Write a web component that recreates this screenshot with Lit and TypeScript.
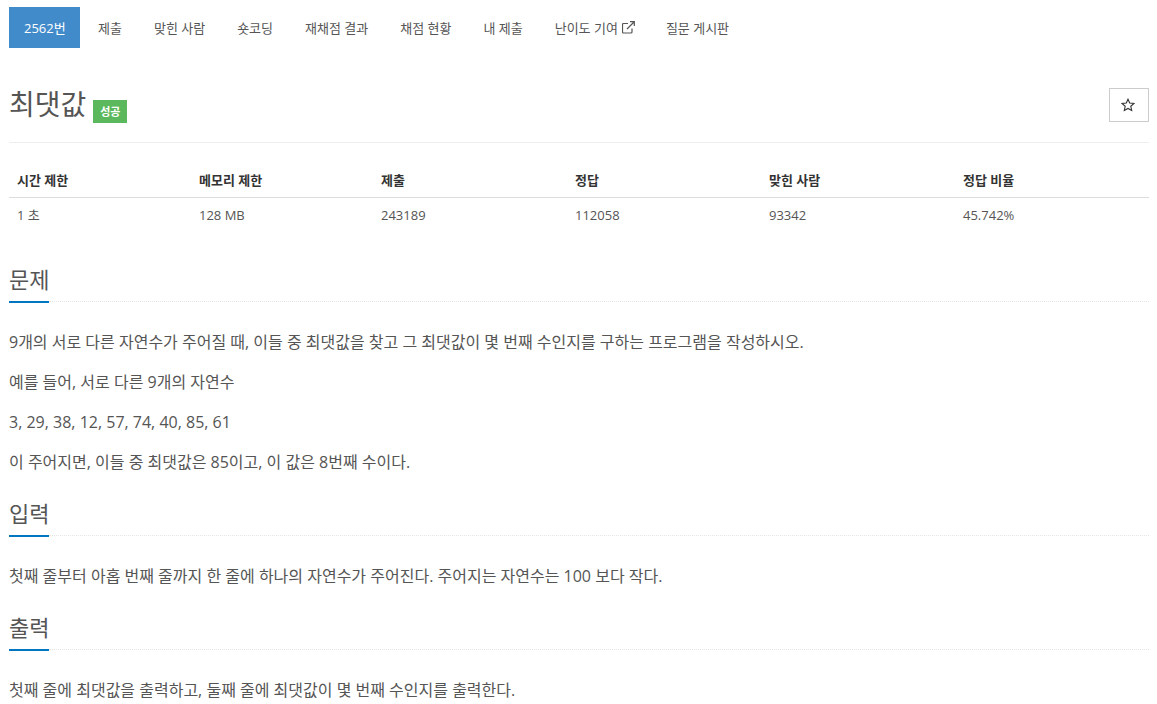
import { LitElement, html, css } from "lit";
import { customElement } from "lit/decorators.js";

const tabs = ["제출", "맞힌 사람", "숏코딩", "재채점 결과", "채점 현황", "내 제출"];
const heads = ["시간 제한", "메모리 제한", "제출", "정답", "맞힌 사람", "정답 비율"];
const vals = ["1 초", "128 MB", "243189", "112058", "93342", "45.742%"];

@customElement("app-root")
export class AppRoot extends LitElement {
  static styles = css`
    :host {
      display: block;
      height: 704px;
      overflow: hidden;
      background: #fff;
      color: #555;
      font-family: "Open Sans", "Noto Sans CJK KR", sans-serif;
      font-size: 13px;
      line-height: 20px;
      padding: 7px 8px 0 9px;
      box-sizing: border-box;
    }
    .nav {
      display: flex;
      gap: 2px;
      height: 41px;
    }
    .nav a {
      display: flex;
      align-items: center;
      gap: 4px;
      padding: 0 15px;
      color: #555;
    }
    .nav a.active {
      background: #428bca;
      color: #fff;
      width: 71px;
      box-sizing: border-box;
      margin-right: 1px;
      white-space: nowrap;
    }
    .nav svg {
      margin-right: -1px;
    }
    .head {
      display: flex;
      align-items: flex-end;
      justify-content: space-between;
      margin-top: 38px;
      border-bottom: 1px solid #eee;
      padding-bottom: 20px;
      height: 36px;
    }
    .title {
      display: flex;
      align-items: flex-end;
      gap: 7px;
    }
    h1 {
      margin: 0;
      font-size: 28px;
      line-height: 36px;
      font-weight: 400;
      color: #555;
    }
    .badge {
      background: #5cb85c;
      color: #fff;
      font-size: 11px;
      font-weight: 700;
      line-height: 23px;
      height: 23px;
      width: 34px;
      text-align: center;
      margin-bottom: -1px;
    }
    .star {
      height: 32px;
      border: 1px solid #ccc;
      display: flex;
      align-items: center;
      justify-content: center;
      padding-right: 2px;
      width: 36px;
    }
    .table {
      display: grid;
      grid-template-columns: 182px 182px 194px 194px 194px 1fr;
      margin-top: 20px;
    }
    .table div {
      padding: 8px;
      line-height: 19px;
    }
    .table .th {
      font-weight: 700;
      color: #333;
      font-size: 13px;
      border-bottom: 1px solid #ddd;
      padding-bottom: 7px;
    }
    .td {
      font-size: 13px;
    }
    h2 {
      margin: 0;
      font-size: 22px;
      font-weight: 400;
      line-height: 31px;
      color: #555;
    }
    .rule {
      height: 2px;
      display: flex;
      margin-top: 6px;
    }
    .rule i {
      display: block;
      width: 40px;
      height: 2px;
      background: #0076c0;
    }
    .rule b {
      flex: 1;
      height: 1px;
      border-top: 1px dotted #e5e5e5;
    }
    p {
      margin: 0 0 10px;
      font-size: 16px;
      line-height: 30px;
      color: #555;
    }
    .body {
      margin-top: 24px;
    }
    .sec-first {
      margin-top: 31px;
    }
    .sec {
      margin-top: 21px;
    }
  `;

  section(title: string, lines: string[], cls: string) {
    return html`<div class=${cls}>
      <h2>${title}</h2>
      <div class="rule"><i></i><b></b></div>
      <div class="body">${lines.map((l) => html`<p>${l}</p>`)}</div>
    </div>`;
  }

  render() {
    return html`
      <nav class="nav">
        <a class="active">2562번</a>
        ${tabs.map((t) => html`<a>${t}</a>`)}
        <a>난이도 기여
          <svg width="13" height="13" viewBox="0 0 13 13" fill="none" stroke="#555" stroke-width="1.2">
            <path d="M10 7.500v3.500a1 1 0 0 1-1 1h-7.500a1 1 0 0 1-1-1v-7.500a1 1 0 0 1 1-1h4.500" />
            <path d="M5 8L12 1M8 .7h4.300v4.300" />
          </svg>
        </a>
        <a>질문 게시판</a>
      </nav>
      <div class="head">
        <div class="title">
          <h1>최댓값</h1>
          <span class="badge">성공</span>
        </div>
        <div class="star">
          <svg width="14" height="14" viewBox="0 0 14 14" fill="none" stroke="#333" stroke-width="1.100">
            <path d="M7 1.200l1.700 3.800 4.300.5-3.200 2.800.9 4.200L7 10.400l-3.700 2.100.9-4.200L1 5.500l4.300-.5z" />
          </svg>
        </div>
      </div>
      <div class="table">
        ${heads.map((h) => html`<div class="th">${h}</div>`)}
        ${vals.map((v) => html`<div class="td">${v}</div>`)}
      </div>
      ${this.section("문제", [
        "9개의 서로 다른 자연수가 주어질 때, 이들 중 최댓값을 찾고 그 최댓값이 몇 번째 수인지를 구하는 프로그램을 작성하시오.",
        "예를 들어, 서로 다른 9개의 자연수",
        "3, 29, 38, 12, 57, 74, 40, 85, 61",
        "이 주어지면, 이들 중 최댓값은 85이고, 이 값은 8번째 수이다.",
      ], "sec-first")}
      ${this.section("입력", ["첫째 줄부터 아홉 번째 줄까지 한 줄에 하나의 자연수가 주어진다. 주어지는 자연수는 100 보다 작다."], "sec")}
      ${this.section("출력", ["첫째 줄에 최댓값을 출력하고, 둘째 줄에 최댓값이 몇 번째 수인지를 출력한다."], "sec")}
    `;
  }
}
